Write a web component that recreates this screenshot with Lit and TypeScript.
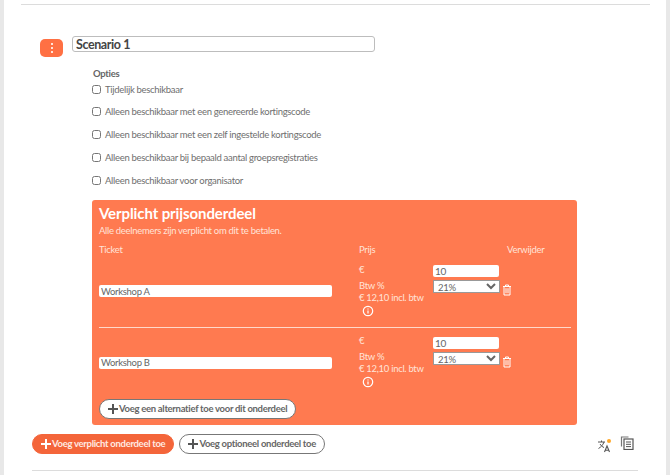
import { LitElement, css, html, svg } from 'lit';
import { customElement } from 'lit/decorators.js';

const plus = (color: string) => html`<svg class="plus" viewBox="0 0 10 10" width="10" height="10">
  <path d="M5 0v10M0 5h10" stroke=${color} stroke-width="2" fill="none"></path>
</svg>`;

const trash = svg`<path d="M1 2.500h8M3.500 2.500V1h3v1.500M2 2.500v8.500h6v-8.500M4 4.200v5M6 4.200v5" stroke="#fff" stroke-width="1" fill="none"></path>`;

const options = [
  'Tijdelijk beschikbaar',
  'Alleen beschikbaar met een genereerde kortingscode',
  'Alleen beschikbaar met een zelf ingestelde kortingscode',
  'Alleen beschikbaar bij bepaald aantal groepsregistraties',
  'Alleen beschikbaar voor organisator',
];

const tickets = ['Workshop A', 'Workshop B'];

@customElement('app-root')
class AppRoot extends LitElement {
  static styles = css`
    :host {
      display: block;
      height: 475px;
      overflow: hidden;
      background: #fff;
      font-family: Lato, sans-serif;
      font-size: 9.5px;
      letter-spacing: -0.3px;
      color: #6f6f6f;
      border-left: 4px solid #e8e8e8;
      border-right: 4px solid #e8e8e8;
      box-sizing: border-box;
    }
    .top-line {
      height: 1px;
      margin: 4px 16px 0 17px;
      background: #dcdcdc;
    }
    .title-row {
      display: flex;
      align-items: flex-start;
      gap: 9px;
      padding: 31px 0 0 36px;
    }
    .menu {
      width: 23px;
      height: 18px;
      margin-top: 3px;
      border-radius: 5px;
      background: #ff7043;
      display: flex;
      flex-direction: column;
      align-items: center;
      justify-content: center;
      gap: 2px;
    }
    .menu i {
      width: 2px;
      height: 2px;
      background: #ffe3d8;
    }
    .title {
      width: 303px;
      height: 16px;
      box-sizing: border-box;
      border: 1px solid #bdbdbd;
      border-radius: 3px;
      padding: 0 3px;
      font-family: inherit;
      font-size: 12.5px;
      font-weight: 700;
      letter-spacing: -0.4px;
      color: #444;
      background: #fff;
      outline: none;
    }
    .body {
      padding: 0 0 0 88px;
    }
    .opties {
      margin: 11px 0 0 1px;
      font-weight: 700;
      color: #666;
      line-height: 12px;
    }
    .options {
      display: flex;
      flex-direction: column;
      gap: 10.9px;
      margin-top: 3px;
    }
    .options label {
      display: flex;
      align-items: center;
      gap: 4px;
      height: 12px;
    }
    .options input {
      width: 9px;
      height: 9px;
      margin: 0;
    }
    .panel {
      width: 485px;
      height: 225px;
      margin-top: 13px;
      box-sizing: border-box;
      padding: 5px 6px 5px 7px;
      border-radius: 3px;
      background: #ff7a50;
      color: #ffe3d8;
    }
    h2 {
      margin: 0;
      font-size: 15px;
      line-height: 16px;
      font-weight: 700;
      letter-spacing: -0.1px;
      color: #fff;
    }
    .sub {
      margin-top: 4px;
      line-height: 12px;
    }
    .head {
      display: grid;
      grid-template-columns: 260px 148px 1fr;
      margin-top: 7px;
      line-height: 12px;
    }
    .ticket {
      display: grid;
      grid-template-columns: 260px 74px 82px;
      align-items: center;
      height: 71px;
      box-sizing: border-box;
    }
    .ticket + .ticket {
      border-top: 1px solid #ffd9cb;
    }
    .name,
    .num,
    .vat {
      box-sizing: border-box;
      border: none;
      background: #fff;
      font-family: inherit;
      font-size: 9.5px;
      letter-spacing: inherit;
      color: #666;
      outline: none;
      padding: 0 2px;
    }
    .name {
      width: 233px;
      height: 12px;
      border-radius: 2px;
    }
    .price {
      line-height: 12px;
      margin-top: -2px;
    }
    .price p {
      margin: 0;
    }
    .price .euro {
      margin-bottom: 4px;
    }
    .info {
      display: block;
      margin: 1px 0 0 3px;
    }
    .fields {
      display: flex;
      flex-direction: column;
      gap: 3px;
      align-self: start;
      margin-top: 9px;
    }
    .num {
      width: 66px;
      height: 12px;
      border-radius: 2px;
      font-size: 10px;
    }
    .vat-row {
      display: flex;
      align-items: flex-end;
      gap: 2px;
    }
    .vat {
      width: 67px;
      height: 13px;
      border: 1px solid #999;
      padding: 0;
    }
    .vat-row svg {
      margin-bottom: -3px;
    }
    .add-alt {
      margin-top: 1px;
    }
    .pill {
      display: inline-flex;
      align-items: center;
      gap: 1px;
      height: 20px;
      box-sizing: border-box;
      padding: 0 8px;
      border: 1px solid #777;
      border-radius: 10px;
      background: #fff;
      color: #666;
      font-family: inherit;
      font-size: 9.5px;
      letter-spacing: -0.3px;
      font-weight: 700;
    }
    .pill.primary {
      border-color: #f4653a;
      background: #f4653a;
      color: #ffe9e1;
    }
    .footer {
      display: flex;
      align-items: center;
      gap: 5px;
      padding: 9px 0 0 28px;
    }
    .tools {
      display: flex;
      align-items: flex-start;
      gap: 9px;
      margin: 2px 32px 0 auto;
    }
    .tools svg:first-child {
      margin-top: 3px;
    }
    .bottom-line {
      height: 1px;
      margin: 16px 28px 0;
      background: #dcdcdc;
    }
  `;

  render() {
    return html`
      <div class="top-line"></div>
      <div class="title-row">
        <div class="menu"><i></i><i></i><i></i></div>
        <input class="title" .value=${'Scenario 1'} />
      </div>
      <div class="body">
        <div class="opties">Opties</div>
        <div class="options">
          ${options.map(o => html`<label><input type="checkbox" /><span>${o}</span></label>`)}
        </div>
        <div class="panel">
          <h2>Verplicht prijsonderdeel</h2>
          <div class="sub">Alle deelnemers zijn verplicht om dit te betalen.</div>
          <div class="head"><span>Ticket</span><span>Prijs</span><span>Verwijder</span></div>
          ${tickets.map(t => html`
            <div class="ticket">
              <input class="name" .value=${t} />
              <div class="price">
                <p class="euro">€</p>
                <p>Btw %</p>
                <p>€ 12,10 incl. btw</p>
                <svg class="info" viewBox="0 0 12 12" width="12" height="12">
                  <circle cx="6" cy="6" r="4.7" stroke="#fff" stroke-width="1.2" fill="none"></circle>
                  <path d="M6 5.400v3M6 3.400v1" stroke="#fff" stroke-width="1.200"></path>
                </svg>
              </div>
              <div class="fields">
                <input class="num" .value=${'10'} />
                <div class="vat-row">
                  <select class="vat"><option>21%</option></select>
                  <svg viewBox="0 0 10 12" width="10" height="12">${trash}</svg>
                </div>
              </div>
            </div>
          `)}
          <button class="pill add-alt">${plus('#555')}Voeg een alternatief toe voor dit onderdeel</button>
        </div>
      </div>
      <div class="footer">
        <button class="pill primary">${plus('#fff')}Voeg verplicht onderdeel toe</button>
        <button class="pill">${plus('#555')}Voeg optioneel onderdeel toe</button>
        <div class="tools">
          <svg viewBox="0 0 14 14" width="14" height="14">
            <path d="M1 3h7M4.500 1.500V3M7 3C6 6 4 8 1.500 9.500M3 5c1 1.500 2.500 3 4 3.500" stroke="#555" stroke-width="1" fill="none"></path>
            <path d="M7.500 13l2.500-6 2.500 6M8.500 11.200h3" stroke="#555" stroke-width="1.100" fill="none"></path>
            <circle cx="12" cy="2" r="2" fill="#ffa726"></circle>
          </svg>
          <svg viewBox="0 0 14 14" width="14" height="14">
            <path d="M1.500 10.500V1h7" stroke="#777" stroke-width="1.200" fill="none"></path>
            <rect x="4" y="3" width="9" height="10.500" stroke="#555" stroke-width="1.200" fill="none"></rect>
            <path d="M6 6h5M6 8.300h5M6 10.600h5" stroke="#555" stroke-width="1"></path>
          </svg>
        </div>
      </div>
      <div class="bottom-line"></div>
    `;
  }
}

export default AppRoot;
